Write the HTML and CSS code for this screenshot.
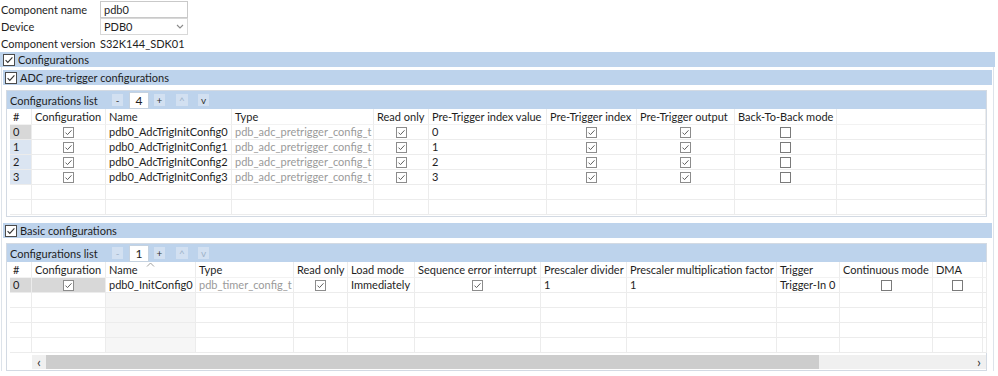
FILE: index.html
```html
<!DOCTYPE html>
<html>
<head>
<meta charset="utf-8">
<title>pdb0</title>
<link rel="stylesheet" href="styles.css">
</head>
<body>
<div class="props">
  <div class="field"><span class="lbl">Component name</span><span class="input">pdb0</span></div>
  <div class="field"><span class="lbl">Device</span><span class="input select">PDB0<svg class="chev" width="8" height="5" viewBox="0 0 8 5"><path d="M1 1l3 3 3-3" fill="none" stroke="#8a8a8a" stroke-width="1.1"/></svg></span></div>
  <div class="field ver"><span class="lbl">Component version</span><span class="val">S32K144_SDK01</span></div>
</div>

<div class="section">
  <div class="bar"><svg class="hcb" width="12" height="12" viewBox="0 0 12 12"><rect x=".5" y=".5" width="11" height="11" fill="#fff" stroke="#4a4a4a"/><path d="M2.6 6.2l2.2 2.2 4.6-5" fill="none" stroke="#333" stroke-width="1.1"/></svg>Configurations</div>
  <div class="section-body">
    <div class="bar sub"><svg class="hcb" width="12" height="12" viewBox="0 0 12 12"><rect x=".5" y=".5" width="11" height="11" fill="#fff" stroke="#4a4a4a"/><path d="M2.6 6.2l2.2 2.2 4.6-5" fill="none" stroke="#333" stroke-width="1.1"/></svg>ADC pre-trigger configurations</div>

    <div class="gridbox">
      <div class="listbar">
        <span class="ltitle">Configurations list</span>
        <span class="btn b-minus">-</span>
        <span class="num">4</span>
        <span class="btn b-plus">+</span>
        <span class="btn b-up dis">^</span>
        <span class="btn b-down">v</span>
      </div>
      <div class="grid g1">
        <div class="c h">#</div><div class="c h">Configuration</div><div class="c h">Name</div><div class="c h">Type</div><div class="c h">Read only</div><div class="c h">Pre-Trigger index value</div><div class="c h">Pre-Trigger index</div><div class="c h">Pre-Trigger output</div><div class="c h">Back-To-Back mode</div><div class="c h"></div>

        <div class="c idx sel">0</div><div class="c ctr"><svg class="cb" width="11" height="11" viewBox="0 0 11 11"><rect x=".5" y=".5" width="10" height="10" fill="#fff" stroke="#8c8c8c"/><path d="M2.5 5.6l2 2 4-4.3" fill="none" stroke="#606060"/></svg></div><div class="c">pdb0_AdcTrigInitConfig0</div><div class="c gray">pdb_adc_pretrigger_config_t</div><div class="c ctr"><svg class="cb" width="11" height="11" viewBox="0 0 11 11"><rect x=".5" y=".5" width="10" height="10" fill="#fff" stroke="#8c8c8c"/><path d="M2.5 5.6l2 2 4-4.3" fill="none" stroke="#606060"/></svg></div><div class="c">0</div><div class="c ctr"><svg class="cb" width="11" height="11" viewBox="0 0 11 11"><rect x=".5" y=".5" width="10" height="10" fill="#fff" stroke="#8c8c8c"/><path d="M2.5 5.6l2 2 4-4.3" fill="none" stroke="#606060"/></svg></div><div class="c ctr"><svg class="cb" width="11" height="11" viewBox="0 0 11 11"><rect x=".5" y=".5" width="10" height="10" fill="#fff" stroke="#8c8c8c"/><path d="M2.5 5.6l2 2 4-4.3" fill="none" stroke="#606060"/></svg></div><div class="c ctr"><svg class="cb" width="11" height="11" viewBox="0 0 11 11"><rect x=".5" y=".5" width="10" height="10" fill="#fff" stroke="#7a7a7a"/></svg></div><div class="c"></div>

        <div class="c idx">1</div><div class="c ctr"><svg class="cb" width="11" height="11" viewBox="0 0 11 11"><rect x=".5" y=".5" width="10" height="10" fill="#fff" stroke="#8c8c8c"/><path d="M2.5 5.6l2 2 4-4.3" fill="none" stroke="#606060"/></svg></div><div class="c">pdb0_AdcTrigInitConfig1</div><div class="c gray">pdb_adc_pretrigger_config_t</div><div class="c ctr"><svg class="cb" width="11" height="11" viewBox="0 0 11 11"><rect x=".5" y=".5" width="10" height="10" fill="#fff" stroke="#8c8c8c"/><path d="M2.5 5.6l2 2 4-4.3" fill="none" stroke="#606060"/></svg></div><div class="c">1</div><div class="c ctr"><svg class="cb" width="11" height="11" viewBox="0 0 11 11"><rect x=".5" y=".5" width="10" height="10" fill="#fff" stroke="#8c8c8c"/><path d="M2.5 5.6l2 2 4-4.3" fill="none" stroke="#606060"/></svg></div><div class="c ctr"><svg class="cb" width="11" height="11" viewBox="0 0 11 11"><rect x=".5" y=".5" width="10" height="10" fill="#fff" stroke="#8c8c8c"/><path d="M2.5 5.6l2 2 4-4.3" fill="none" stroke="#606060"/></svg></div><div class="c ctr"><svg class="cb" width="11" height="11" viewBox="0 0 11 11"><rect x=".5" y=".5" width="10" height="10" fill="#fff" stroke="#7a7a7a"/></svg></div><div class="c"></div>

        <div class="c idx">2</div><div class="c ctr"><svg class="cb" width="11" height="11" viewBox="0 0 11 11"><rect x=".5" y=".5" width="10" height="10" fill="#fff" stroke="#8c8c8c"/><path d="M2.5 5.6l2 2 4-4.3" fill="none" stroke="#606060"/></svg></div><div class="c">pdb0_AdcTrigInitConfig2</div><div class="c gray">pdb_adc_pretrigger_config_t</div><div class="c ctr"><svg class="cb" width="11" height="11" viewBox="0 0 11 11"><rect x=".5" y=".5" width="10" height="10" fill="#fff" stroke="#8c8c8c"/><path d="M2.5 5.6l2 2 4-4.3" fill="none" stroke="#606060"/></svg></div><div class="c">2</div><div class="c ctr"><svg class="cb" width="11" height="11" viewBox="0 0 11 11"><rect x=".5" y=".5" width="10" height="10" fill="#fff" stroke="#8c8c8c"/><path d="M2.5 5.6l2 2 4-4.3" fill="none" stroke="#606060"/></svg></div><div class="c ctr"><svg class="cb" width="11" height="11" viewBox="0 0 11 11"><rect x=".5" y=".5" width="10" height="10" fill="#fff" stroke="#8c8c8c"/><path d="M2.5 5.6l2 2 4-4.3" fill="none" stroke="#606060"/></svg></div><div class="c ctr"><svg class="cb" width="11" height="11" viewBox="0 0 11 11"><rect x=".5" y=".5" width="10" height="10" fill="#fff" stroke="#7a7a7a"/></svg></div><div class="c"></div>

        <div class="c idx">3</div><div class="c ctr"><svg class="cb" width="11" height="11" viewBox="0 0 11 11"><rect x=".5" y=".5" width="10" height="10" fill="#fff" stroke="#8c8c8c"/><path d="M2.5 5.6l2 2 4-4.3" fill="none" stroke="#606060"/></svg></div><div class="c">pdb0_AdcTrigInitConfig3</div><div class="c gray">pdb_adc_pretrigger_config_t</div><div class="c ctr"><svg class="cb" width="11" height="11" viewBox="0 0 11 11"><rect x=".5" y=".5" width="10" height="10" fill="#fff" stroke="#8c8c8c"/><path d="M2.5 5.6l2 2 4-4.3" fill="none" stroke="#606060"/></svg></div><div class="c">3</div><div class="c ctr"><svg class="cb" width="11" height="11" viewBox="0 0 11 11"><rect x=".5" y=".5" width="10" height="10" fill="#fff" stroke="#8c8c8c"/><path d="M2.5 5.6l2 2 4-4.3" fill="none" stroke="#606060"/></svg></div><div class="c ctr"><svg class="cb" width="11" height="11" viewBox="0 0 11 11"><rect x=".5" y=".5" width="10" height="10" fill="#fff" stroke="#8c8c8c"/><path d="M2.5 5.6l2 2 4-4.3" fill="none" stroke="#606060"/></svg></div><div class="c ctr"><svg class="cb" width="11" height="11" viewBox="0 0 11 11"><rect x=".5" y=".5" width="10" height="10" fill="#fff" stroke="#7a7a7a"/></svg></div><div class="c"></div>

        <div class="c"></div><div class="c"></div><div class="c"></div><div class="c"></div><div class="c"></div><div class="c"></div><div class="c"></div><div class="c"></div><div class="c"></div><div class="c"></div>
        <div class="c"></div><div class="c"></div><div class="c"></div><div class="c"></div><div class="c"></div><div class="c"></div><div class="c"></div><div class="c"></div><div class="c"></div><div class="c"></div>
      </div>
    </div>

    <div class="bar sub"><svg class="hcb" width="12" height="12" viewBox="0 0 12 12"><rect x=".5" y=".5" width="11" height="11" fill="#fff" stroke="#4a4a4a"/><path d="M2.6 6.2l2.2 2.2 4.6-5" fill="none" stroke="#333" stroke-width="1.1"/></svg>Basic configurations</div>

    <div class="gridbox">
      <div class="listbar">
        <span class="ltitle">Configurations list</span>
        <span class="btn b-minus dis">-</span>
        <span class="num">1</span>
        <span class="btn b-plus">+</span>
        <span class="btn b-up dis">^</span>
        <span class="btn b-down dis">v</span>
      </div>
      <div class="grid g2">
        <div class="c h">#</div><div class="c h">Configuration</div><div class="c h sorted">Name<svg class="caret" width="9" height="5" viewBox="0 0 9 5"><path d="M1 4.5l3.5-3.5 3.5 3.5" fill="none" stroke="#a0a0a0"/></svg></div><div class="c h">Type</div><div class="c h">Read only</div><div class="c h">Load mode</div><div class="c h">Sequence error interrupt</div><div class="c h">Prescaler divider</div><div class="c h">Prescaler multiplication factor</div><div class="c h">Trigger</div><div class="c h">Continuous mode</div><div class="c h">DMA</div><div class="c h"></div>

        <div class="c idx sel">0</div><div class="c ctr sel"><svg class="cb" width="11" height="11" viewBox="0 0 11 11"><rect x=".5" y=".5" width="10" height="10" fill="#fff" stroke="#8c8c8c"/><path d="M2.5 5.6l2 2 4-4.3" fill="none" stroke="#606060"/></svg></div><div class="c">pdb0_InitConfig0</div><div class="c gray">pdb_timer_config_t</div><div class="c ctr"><svg class="cb" width="11" height="11" viewBox="0 0 11 11"><rect x=".5" y=".5" width="10" height="10" fill="#fff" stroke="#8c8c8c"/><path d="M2.5 5.6l2 2 4-4.3" fill="none" stroke="#606060"/></svg></div><div class="c">Immediately</div><div class="c ctr"><svg class="cb" width="11" height="11" viewBox="0 0 11 11"><rect x=".5" y=".5" width="10" height="10" fill="#fff" stroke="#8c8c8c"/><path d="M2.5 5.6l2 2 4-4.3" fill="none" stroke="#606060"/></svg></div><div class="c">1</div><div class="c">1</div><div class="c">Trigger-In 0</div><div class="c ctr"><svg class="cb" width="11" height="11" viewBox="0 0 11 11"><rect x=".5" y=".5" width="10" height="10" fill="#fff" stroke="#7a7a7a"/></svg></div><div class="c ctr"><svg class="cb" width="11" height="11" viewBox="0 0 11 11"><rect x=".5" y=".5" width="10" height="10" fill="#fff" stroke="#7a7a7a"/></svg></div><div class="c"></div>

        <div class="c"></div><div class="c"></div><div class="c sortcol"></div><div class="c"></div><div class="c"></div><div class="c"></div><div class="c"></div><div class="c"></div><div class="c"></div><div class="c"></div><div class="c"></div><div class="c"></div><div class="c"></div>
        <div class="c"></div><div class="c"></div><div class="c sortcol"></div><div class="c"></div><div class="c"></div><div class="c"></div><div class="c"></div><div class="c"></div><div class="c"></div><div class="c"></div><div class="c"></div><div class="c"></div><div class="c"></div>
        <div class="c"></div><div class="c"></div><div class="c sortcol"></div><div class="c"></div><div class="c"></div><div class="c"></div><div class="c"></div><div class="c"></div><div class="c"></div><div class="c"></div><div class="c"></div><div class="c"></div><div class="c"></div>
        <div class="c"></div><div class="c"></div><div class="c sortcol"></div><div class="c"></div><div class="c"></div><div class="c"></div><div class="c"></div><div class="c"></div><div class="c"></div><div class="c"></div><div class="c"></div><div class="c"></div><div class="c"></div>
      </div>
      <div class="hscroll">
        <span class="arrow">&lsaquo;</span>
        <div class="track"><div class="thumb"></div></div>
        <span class="arrow">&rsaquo;</span>
      </div>
    </div>
  </div>
</div>
</body>
</html>
```

FILE: styles.css
```css
html, body {
  margin: 0;
  padding: 0;
  background: #fff;
}
body {
  font-family: Lato, "Noto Sans", sans-serif;
  font-size: 11px;
  color: #1e1e1e;
  width: 998px;
  height: 376px;
  overflow: hidden;
}

/* property rows */
.props {
  padding-top: 1px;
}
.field {
  display: flex;
  align-items: center;
  height: 17px;
}
.field.ver {
  height: 16px;
}
.lbl {
  width: 99px;
  padding-left: 1px;
  white-space: nowrap;
}
.input {
  box-sizing: border-box;
  width: 88px;
  height: 17px;
  border: 1px solid #c9c9c9;
  background: #fff;
  padding-left: 3px;
  line-height: 15px;
  display: flex;
  align-items: center;
}
.input.select {
  justify-content: space-between;
  padding-right: 3px;
  border-color: #d8d8d8;
}
.chev {
  display: block;
}
.val {
  white-space: nowrap;
}

/* sections */
.section {
  width: 995px;
  margin-top: 1px;
}
.bar {
  display: flex;
  align-items: center;
  height: 15px;
  background: #bdd3ec;
  white-space: nowrap;
  padding-left: 3px;
  font-size: 11px;
}
.hcb {
  display: block;
  margin-right: 3px;
  flex: none;
}
.section-body {
  margin: 0 1px;
  border-left: 1px solid #dde3ea;
  border-right: 1px solid #dde3ea;
  padding: 3px 1px 0 1px;
}
.bar.sub {
  padding-left: 2px;
}

/* grid boxes */
.gridbox {
  margin: 5px 5px 6px 3px;
  border: 1px solid #d3dae3;
  padding-bottom: 1px;
}
.listbar {
  display: flex;
  align-items: center;
  height: 18px;
  background: #bdd3ec;
  padding-left: 3px;
  font-size: 11px;
}
.ltitle {
  width: 102px;
  white-space: nowrap;
}
.btn {
  box-sizing: border-box;
  width: 11px;
  height: 12px;
  background: #d2e0f1;
  display: flex;
  align-items: center;
  justify-content: center;
  font-size: 10px;
  line-height: 12px;
  color: #333;
}
.btn.dis {
  color: #9fb3c9;
}
.num {
  box-sizing: border-box;
  width: 20px;
  height: 17px;
  margin: 0 5px 0 6px;
  background: #fff;
  border: 1px solid #c5d2e0;
  display: flex;
  align-items: center;
  justify-content: center;
  font-size: 12px;
}
.b-up {
  margin-left: 11px;
  width: 12px;
}
.b-down {
  margin-left: 10px;
}

.grid {
  display: grid;
  margin: 0 0 0 3px;
  grid-template-rows: 16px;
  grid-auto-rows: 15px;
}
.g1 {
  grid-template-columns: 22px 74px 126px 142px 55px 118px 90px 98px 102px 1fr;
}
.g2 {
  grid-template-columns: 22px 74px 90px 98px 54px 67px 126px 86px 150px 63px 93px 50px 1fr;
}
.c {
  box-sizing: border-box;
  border-right: 1px solid #ececec;
  border-bottom: 1px solid #ececec;
  padding-left: 3px;
  line-height: 14px;
  white-space: nowrap;
  overflow: hidden;
  position: relative;
}
.c.h {
  line-height: 15px;
  border-bottom-color: #f2f2f2;
}
.c.ctr {
  display: flex;
  align-items: center;
  justify-content: center;
  padding-left: 0;
}
.cb {
  display: block;
}
.c.idx {
  background: #dbe5f2;
}
.c.sel {
  background: #d8d8d8;
}
.c.gray {
  color: #9a9a9a;
}
.c.sortcol {
  background: #f6f6f6;
}
.caret {
  position: absolute;
  left: 40px;
  top: 0;
}

/* horizontal scroll bar */
.hscroll {
  display: flex;
  align-items: center;
  height: 14px;
  margin: 2px 0 0 25px;
  background: #f0f0f0;
}
.arrow {
  width: 14px;
  text-align: center;
  font-size: 14px;
  line-height: 14px;
  color: #333;
  flex: none;
}
.track {
  flex: 1;
  height: 14px;
}
.thumb {
  width: 773px;
  height: 14px;
  background: #cdcdcd;
}
```
